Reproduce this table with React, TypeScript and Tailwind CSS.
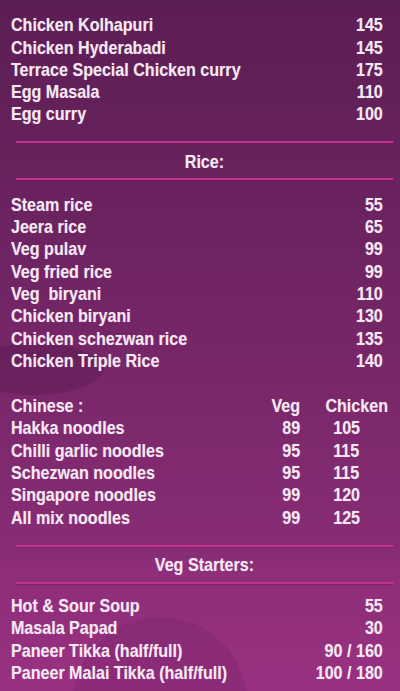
import React from "react";

const font = { fontFamily: '"Liberation Sans", Arial, sans-serif' };

function Row({ name, price }: { name: string; price: string }) {
  return (
    <div className="flex justify-between h-[22.3px] items-center">
      <span className="whitespace-pre">{name}</span>
      <span>{price}</span>
    </div>
  );
}

function Row3({ name, veg, chicken }: { name: string; veg: string; chicken: string }) {
  return (
    <div className="flex h-[22.3px] items-center">
      <span className="flex-1">{name}</span>
      <span className="w-[46px] text-right">{veg}</span>
      <span className="w-[100px] pl-[38px]">{chicken}</span>
    </div>
  );
}

function Divider() {
  return <div className="h-[2px] bg-[#c2348c] shadow-[0_1px_0_rgba(120,20,80,0.5)]" />;
}

function Header({ title }: { title: string }) {
  return (
    <div className="ml-[18px] mr-[8px]">
      <Divider />
      <div className="h-[35px] flex items-center justify-center pt-[1px]">{title}</div>
      <Divider />
    </div>
  );
}

export default function App() {
  const curries = [
    ["Chicken Kolhapuri", "145"],
    ["Chicken Hyderabadi", "145"],
    ["Terrace Special Chicken curry", "175"],
    ["Egg Masala", "110"],
    ["Egg curry", "100"],
  ];
  const rice = [
    ["Steam rice", "55"],
    ["Jeera rice", "65"],
    ["Veg pulav", "99"],
    ["Veg fried rice", "99"],
    ["Veg  biryani", "110"],
    ["Chicken biryani", "130"],
    ["Chicken schezwan rice", "135"],
    ["Chicken Triple Rice", "140"],
  ];
  const chinese = [
    ["Hakka noodles", "89", "105"],
    ["Chilli garlic noodles", "95", "115"],
    ["Schezwan noodles", "95", "115"],
    ["Singapore noodles", "99", "120"],
    ["All mix noodles", "99", "125"],
  ];
  const starters = [
    ["Hot & Sour Soup", "55"],
    ["Masala Papad", "30"],
    ["Paneer Tikka (half/full)", "90 / 160"],
    ["Paneer Malai Tikka (half/full)", "100 / 180"],
  ];
  return (
    <div
      className="relative w-[400px] h-[691px] overflow-hidden text-[18.5px] font-bold text-[#f6e8f2] bg-[linear-gradient(180deg,#5b1e53_0%,#68225e_25%,#762667_50%,#852b73_75%,#96307f_100%)]"
      style={font}
    >
      {/* faint background decorations */}
      <svg className="absolute left-0 top-0 pointer-events-none" width="400" height="691">
        <path d="M-10 350 C 30 336, 75 342, 100 360 C 112 370, 100 386, 60 393 C 30 398, 5 393, -10 389 Z" fill="#561a4e" opacity="0.4" />
        <circle cx="160" cy="705" r="88" fill="#6a2064" opacity="0.3" />
        <rect x="0" y="560" width="400" height="131" fill="#a6388e" opacity="0.15" />
      </svg>
      <div className="relative w-[460px] scale-x-[0.87] origin-top-left flex flex-col [text-shadow:0_0_1px_rgba(255,255,255,0.3)]">
        <div className="pt-[14px] pl-[12.6px] pr-[20px]">
          {curries.map(([n, p]) => (
            <Row key={n} name={n} price={p} />
          ))}
        </div>
        <div className="mt-[16px]">
          <Header title="Rice:" />
        </div>
        <div className="mt-[13px] pl-[12.6px] pr-[20px]">
          {rice.map(([n, p]) => (
            <Row key={n} name={n} price={p} />
          ))}
        </div>
        <div className="mt-[23px] pl-[12.6px] pr-[15px]">
          <div className="flex h-[22.3px] items-center">
            <span className="flex-1">Chinese :</span>
            <span className="w-[46px] text-right">Veg</span>
            <span className="w-[100px] pl-[29px]">Chicken</span>
          </div>
          {chinese.map(([n, v, c]) => (
            <Row3 key={n} name={n} veg={v} chicken={c} />
          ))}
        </div>
        <div className="mt-[16px]">
          <Header title="Veg Starters:" />
        </div>
        <div className="mt-[11px] pl-[12.6px] pr-[20px]">
          {starters.map(([n, p]) => (
            <Row key={n} name={n} price={p} />
          ))}
        </div>
      </div>
    </div>
  );
}
